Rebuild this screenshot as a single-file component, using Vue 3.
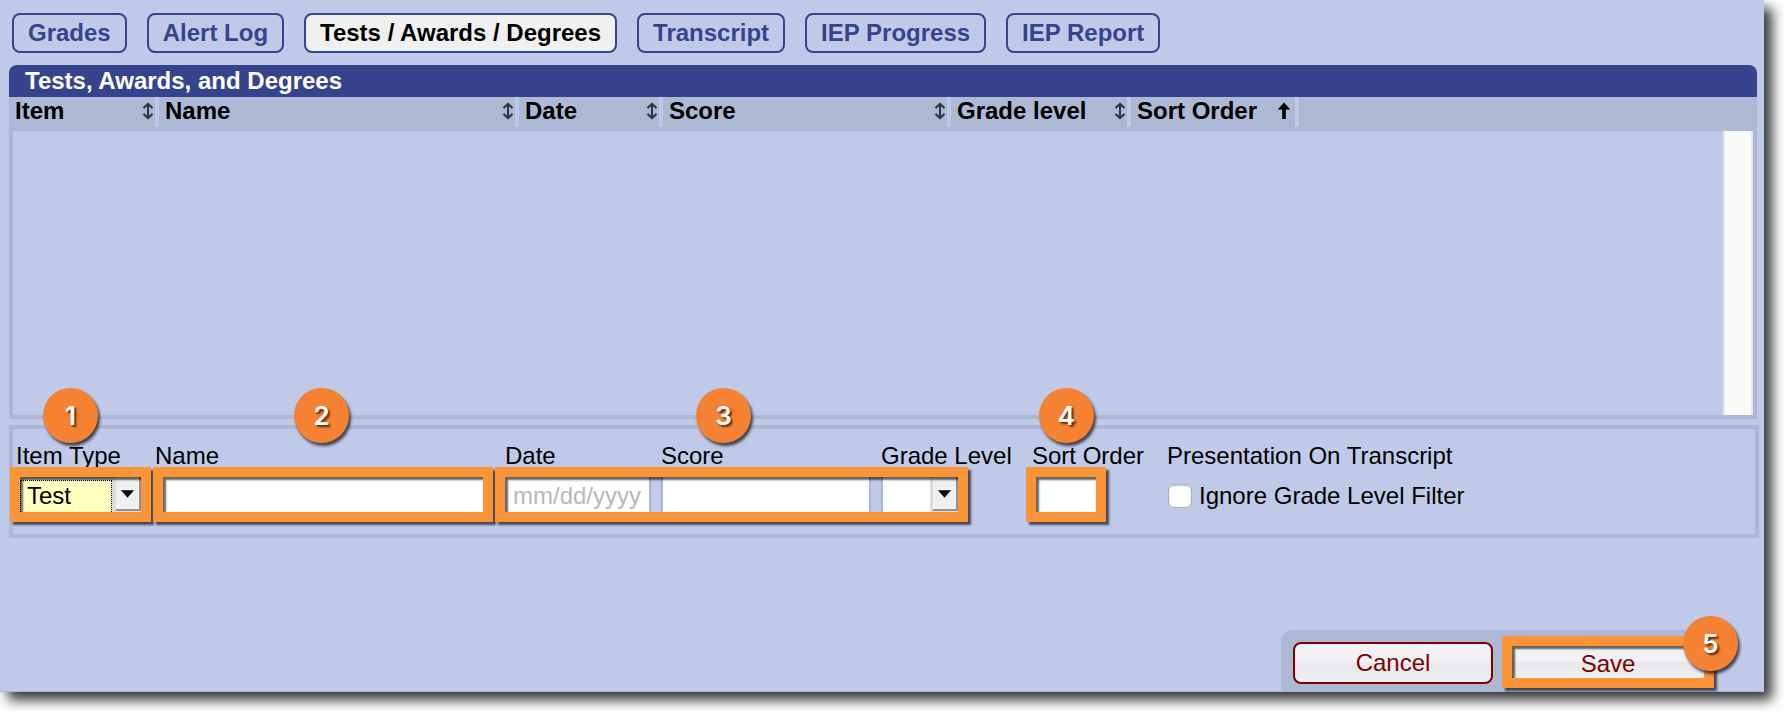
<script setup>
import { ref } from 'vue'

const tabs = ['Grades', 'Alert Log', 'Tests / Awards / Degrees', 'Transcript', 'IEP Progress', 'IEP Report']
const activeTab = ref('Tests / Awards / Degrees')

const columns = [
  { label: 'Item', width: 150 },
  { label: 'Name', width: 360 },
  { label: 'Date', width: 144 },
  { label: 'Score', width: 288 },
  { label: 'Grade level', width: 180 },
  { label: 'Sort Order', width: 168, sorted: true }
]

const itemType = ref('Test')
const name = ref('')
const date = ref('')
const score = ref('')
const gradeLevel = ref('')
const sortOrder = ref('')
const ignoreFilter = ref(false)
</script>

<template>
  <div class="shell">
    <main class="page">
      <nav class="tabs">
        <button
          v-for="tab in tabs"
          :key="tab"
          type="button"
          class="tab"
          :class="{ active: tab === activeTab }"
          @click="activeTab = tab"
        >{{ tab }}</button>
      </nav>

      <section class="panel">
        <h1 class="panel-title">Tests, Awards, and Degrees</h1>
        <table class="list-head">
          <colgroup>
            <col v-for="c in columns" :key="c.label" :style="{ width: c.width + 'px' }" />
            <col />
          </colgroup>
          <thead>
            <tr>
              <th v-for="c in columns" :key="c.label" scope="col">
                <div class="head-cell">
                  <span>{{ c.label }}</span>
                  <svg v-if="c.sorted" class="sort sort-up" viewBox="0 0 14 18" aria-hidden="true">
                    <path d="M7 17V5" fill="none" stroke="#000" stroke-width="3.600" />
                    <path d="M7 0.500L13.200 7.500H0.800Z" />
                  </svg>
                  <svg v-else class="sort" viewBox="0 0 12 18" aria-hidden="true">
                    <path d="M6 3V15" fill="none" stroke="#30343e" stroke-width="2" />
                    <path d="M1.500 6L6 2L10.500 6M1.500 12L6 16L10.500 12" fill="none" stroke="#30343e" stroke-width="2.200" />
                  </svg>
                </div>
              </th>
              <td></td>
            </tr>
          </thead>
        </table>
        <div class="list-body"><div class="scrollbar"></div></div>
      </section>

      <form id="entry-form" class="entry" @submit.prevent>
        <div class="group group-type">
          <div class="labels"><label for="item-type">Item Type</label></div>
          <div class="frame">
            <div class="combo combo-type">
              <select id="item-type" v-model="itemType">
                <option>Test</option>
                <option>Award</option>
                <option>Degree</option>
              </select>
              <span class="drop"><svg viewBox="0 0 14 8" aria-hidden="true"><path d="M0 0H14L7 8Z" /></svg></span>
            </div>
          </div>
          <span class="badge">1</span>
        </div>

        <div class="group group-name">
          <div class="labels"><label for="name">Name</label></div>
          <div class="frame"><input id="name" v-model="name" type="text" /></div>
          <span class="badge">2</span>
        </div>

        <div class="group group-detail">
          <div class="labels">
            <label for="date">Date</label>
            <label for="score">Score</label>
            <label for="grade-level">Grade Level</label>
          </div>
          <div class="frame">
            <input id="date" v-model="date" type="text" placeholder="mm/dd/yyyy" />
            <input id="score" v-model="score" type="text" />
            <div class="combo combo-grade">
              <select id="grade-level" v-model="gradeLevel">
                <option value=""></option>
              </select>
              <span class="drop"><svg viewBox="0 0 14 8" aria-hidden="true"><path d="M0 0H14L7 8Z" /></svg></span>
            </div>
          </div>
          <span class="badge">3</span>
        </div>

        <div class="group group-order">
          <div class="labels"><label for="sort-order">Sort Order</label></div>
          <div class="frame"><input id="sort-order" v-model="sortOrder" type="text" /></div>
          <span class="badge">4</span>
        </div>

        <div class="presentation" role="group" aria-labelledby="presentation-title">
          <div id="presentation-title" class="presentation-title">Presentation On Transcript</div>
          <label class="check"><input v-model="ignoreFilter" type="checkbox" />Ignore Grade Level Filter</label>
        </div>
      </form>

      <footer class="actions">
        <button type="button" class="action cancel">Cancel</button>
        <div class="frame frame-save">
          <button type="submit" form="entry-form" class="action save">Save</button>
        </div>
        <span class="badge">5</span>
      </footer>
    </main>
  </div>
</template>

<style>
body {
  margin: 0;
  background: #fff;
}
</style>

<style scoped>
* {
  box-sizing: border-box;
}
.shell {
  display: flex;
  min-height: 100vh;
  padding: 0 20px 20px 0;
  overflow: hidden;
  font: 24px "Liberation Sans", Arial, sans-serif;
  color: #000;
}
.page {
  flex: 1;
  min-width: 0;
  display: flex;
  flex-direction: column;
  padding-left: 9px;
  background: #c0cae8;
  border-bottom: 1px solid #a8b2d6;
  box-shadow: 8px 8px 12px rgba(0, 0, 0, 0.8);
}
button,
input,
select {
  font: inherit;
  color: inherit;
  margin: 0;
}
.tabs {
  display: flex;
  gap: 20px;
  padding: 13px 3px 12px;
}
.tab {
  height: 40px;
  padding: 0 14px;
  border: 2px solid #36448d;
  border-radius: 8px;
  background: transparent;
  color: #36448d;
  font-weight: bold;
  line-height: 36px;
  white-space: nowrap;
}
.tab.active {
  background: #f0f0f0;
  color: #000;
}
.panel {
  margin-right: 7px;
}
.panel-title {
  margin: 0;
  padding-left: 16px;
  border-radius: 8px 8px 0 0;
  background: #36448d;
  color: #fff;
  font-size: 24px;
  line-height: 32px;
}
.list-head {
  width: 100%;
  table-layout: fixed;
  border-collapse: collapse;
  background: #adb8d4;
}
.list-head th {
  height: 34px;
  padding: 0;
  text-align: left;
  vertical-align: top;
}
.head-cell {
  display: flex;
  justify-content: space-between;
  height: 30px;
  padding: 0 1px 0 6px;
  border-right: 4px solid #c0cae8;
  line-height: 27px;
  white-space: nowrap;
}
.sort {
  width: 12px;
  height: 18px;
  margin-top: 5px;
}
.sort-up {
  width: 14px;
  margin-right: 3px;
}
.list-body {
  display: flex;
  justify-content: flex-end;
  height: 288px;
  border: 4px solid #adb8d4;
  border-top: 0;
}
.scrollbar {
  width: 30px;
  background: #fafafa;
  border: solid #e8e8e8;
  border-width: 0 2px;
}
.entry {
  display: flex;
  align-items: flex-start;
  gap: 2px;
  margin: 6px 5px 0 0;
  padding: 16px 0 12px;
  border: 4px solid #adb8d4;
}
.group {
  position: relative;
}
.group-type {
  width: 141px;
  margin-left: -3px;
}
.group-name {
  width: 340px;
}
.group-detail {
  width: 473px;
}
.group-order {
  width: 80px;
  margin-left: 56px;
}
.labels {
  height: 22px;
  padding-left: 6px;
  line-height: 22px;
  white-space: nowrap;
}
.group-name .labels {
  padding-left: 2px;
}
.group-detail .labels {
  display: grid;
  grid-template-columns: 156px 220px 1fr;
  padding-left: 10px;
}
.frame {
  position: relative;
  display: flex;
  height: 55px;
  border: 10px solid #fb9436;
  box-shadow: 3px 3px 2px rgba(40, 42, 52, 0.8);
}
.frame::after {
  content: "";
  position: absolute;
  inset: 0;
  box-shadow: inset 3px 3px 2px rgba(0, 0, 0, 0.6);
  pointer-events: none;
}
.frame input {
  min-width: 0;
  width: 100%;
  height: 35px;
  padding: 2px 8px 0;
  border: 0;
  border-radius: 0;
  background: #fff;
  outline: 0;
}
.frame input::placeholder {
  color: #b9b9b9;
  opacity: 1;
}
.group-detail .frame {
  display: grid;
  grid-template-columns: 146px 210px 77px;
  gap: 10px;
  background: #c0cae8;
}
.group-detail #date {
  border-right: 2px solid #a9b4d6;
}
.group-detail #score {
  border: solid #a9b4d6;
  border-width: 0 2px;
}
.combo {
  display: grid;
  grid-template-columns: 1fr 25px;
  width: 100%;
  height: 35px;
  background: #dcdcdc;
}
.combo select {
  min-width: 0;
  height: 35px;
  padding: 4px 6px 0;
  border: 0;
  border-right: 3px solid #dcdcdc;
  border-left: 2px solid #a9b4d6;
  border-radius: 0;
  background: #fff;
  appearance: none;
  outline: 0;
}
.combo-type select {
  margin: 3px 4px 0 0;
  height: 32px;
  padding: 0 6px 2px;
  border: 1px dotted #000;
  border-bottom: 0;
  background: #ffffc0;
}
.drop {
  display: flex;
  justify-content: center;
  align-items: center;
  height: 34px;
  padding-top: 2px;
  border: solid #929292;
  border-width: 0 2px 2px 0;
  background: #f0f0f0;
}
.drop svg {
  width: 13px;
  height: 8px;
}
.presentation {
  margin-left: 59px;
  white-space: nowrap;
}
.presentation-title {
  line-height: 22px;
}
.check {
  display: flex;
  align-items: center;
  gap: 7px;
  margin-top: 16px;
  padding-left: 1px;
  line-height: 26px;
}
.check input {
  width: 24px;
  height: 24px;
  border: 1px solid #b4b4b4;
  border-radius: 6px;
  background: #fff;
  box-shadow: inset 0 1px 2px rgba(0, 0, 0, 0.25);
  appearance: none;
}
.check input:checked {
  background: #36448d;
}
.badge {
  position: absolute;
  top: -57px;
  width: 55px;
  height: 55px;
  border-radius: 50%;
  background: #f58232;
  box-shadow: 2px 3px 3px rgba(30, 32, 40, 0.8);
  color: #fff;
  font: 600 26px/55px Inter, "Liberation Sans", Arial, sans-serif;
  text-align: center;
  text-shadow: 2px 2px 2px rgba(60, 20, 0, 0.8);
}
.group-type .badge {
  left: 33px;
}
.group-name .badge {
  left: 141px;
}
.group-detail .badge {
  left: 201px;
}
.group-order .badge {
  left: 13px;
}
.actions {
  position: relative;
  display: flex;
  align-self: flex-end;
  gap: 9px;
  margin: auto 50px 0 0;
  padding: 6px 0 3px 12px;
  border-top-left-radius: 12px;
  background: #adb8d4;
}
.action {
  padding: 0;
  color: #800000;
  background: linear-gradient(#f2f3f5 0%, #eff0f3 50%, #e6e8ea 52%, #eeeff1 100%);
}
.cancel {
  width: 200px;
  height: 42px;
  margin-top: 6px;
  border: 2px solid #800000;
  border-radius: 8px;
}
.frame-save {
  width: 212px;
  height: 52px;
}
.save {
  width: 100%;
  height: 32px;
  padding-top: 4px;
  border: 0;
}
.actions .badge {
  top: -14px;
  right: -24px;
}
</style>
